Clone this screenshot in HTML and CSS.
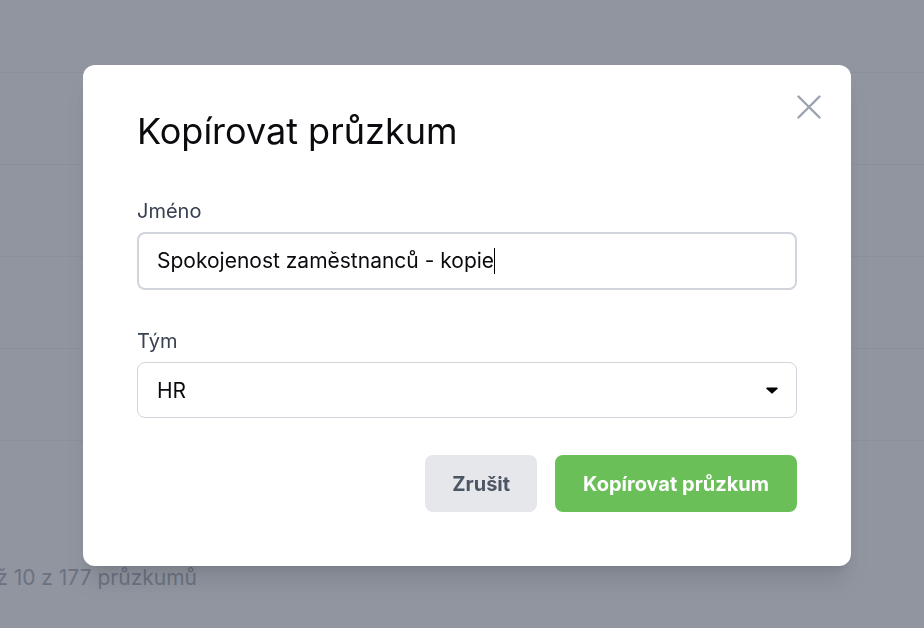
FILE: index.html
```html
<!DOCTYPE html>
<html lang="cs">
<head>
    <meta charset="UTF-8">
    <meta name="viewport" content="width=device-width, initial-scale=1.0">
    <title>Kopírovat průzkum</title>
    <link rel="stylesheet" href="styles.css">
</head>
<body>
    <div class="page">
        <div class="table">
            <div class="thead"></div>
            <div class="row"></div>
            <div class="row"></div>
            <div class="row"></div>
            <div class="row"></div>
        </div>
        <div class="pager">
            <span>Zobrazeno 1 až 10 z 177 průzkumů</span>
        </div>
    </div>

    <div class="overlay">
        <div class="modal">
            <button class="close" aria-label="Zavřít">
                <svg width="24" height="24" viewBox="0 0 24 24" fill="none" stroke="currentColor" stroke-width="2.4" stroke-linecap="round">
                    <path d="M1.5 1.5L22.5 22.5M22.5 1.5L1.5 22.5"/>
                </svg>
            </button>

            <h2 class="title">Kopírovat průzkum</h2>

            <label class="label" for="name">Jméno</label>
            <div class="input-wrap">
                <input id="name" class="input" value="Spokojenost zaměstnanců - kopie">
                <span class="caret" id="caret"></span>
            </div>

            <label class="label team" for="team">Tým</label>
            <div class="select-wrap">
                <select id="team" class="select">
                    <option>HR</option>
                    <option>IT</option>
                    <option>Marketing</option>
                </select>
                <svg class="arrow" width="12" height="7" viewBox="0 0 12 7">
                    <path d="M1 0.5h10a0.8 0.8 0 0 1 0.6 1.3L6.6 6.3a0.8 0.8 0 0 1-1.2 0L0.4 1.8A0.8 0.8 0 0 1 1 0.5z" fill="#000"/>
                </svg>
            </div>

            <div class="actions">
                <button class="btn cancel">Zrušit</button>
                <button class="btn primary">Kopírovat průzkum</button>
            </div>
        </div>
    </div>

    <script>
        // put the text cursor right after the value, like a focused field
        var input = document.getElementById("name");
        var ctx = document.createElement("canvas").getContext("2d");
        ctx.font = getComputedStyle(input).fontSize + " " + getComputedStyle(input).fontFamily;
        document.getElementById("caret").style.left = (20 + ctx.measureText(input.value).width) + "px";
    </script>
</body>
</html>
```

FILE: styles.css
```css
*{
    box-sizing: border-box;
}
body{
    margin: 0;
    font-family: Inter, "Noto Sans", sans-serif;
    background-color: white;
    overflow: hidden;
}
.thead{
    height: 73px;
    border-bottom: 1px solid #e5e7eb;
}
.row{
    height: 92px;
    border-bottom: 1px solid #e5e7eb;
}
.pager{
    width: 197px;
    display: flex;
    justify-content: flex-end;
    padding-top: 123px;
    white-space: nowrap;
    font-size: 21px;
    line-height: 28px;
    color: #6b7280;
}
.overlay{
    position: fixed;
    inset: 0;
    background-color: rgba(107, 114, 128, 0.75);
    padding: 65px 0 0 83px;
}
.modal{
    position: relative;
    width: 768px;
    background-color: white;
    border-radius: 12px;
    padding: 46px 54px 54px;
    box-shadow: 0 20px 25px -5px rgba(0, 0, 0, 0.1), 0 8px 10px -6px rgba(0, 0, 0, 0.1);
}
.close{
    position: absolute;
    top: 30px;
    right: 30px;
    width: 24px;
    height: 24px;
    padding: 0;
    border: none;
    background: none;
    color: #9ca3af;
    display: flex;
}
.title{
    margin: 0;
    font-size: 36px;
    line-height: 40px;
    font-weight: 400;
    color: #0b0b0f;
}
.label{
    display: block;
    margin-top: 46px;
    font-size: 20px;
    line-height: 28px;
    color: #374151;
}
.label.team{
    margin-top: 37px;
}
.input-wrap{
    position: relative;
    margin-top: 7px;
}
.input{
    display: block;
    width: 100%;
    padding: 14px 18px;
    border: 2px solid #d1d5db;
    border-radius: 8px;
    font-family: inherit;
    font-size: 21px;
    line-height: 26px;
    color: #0b0b0f;
    outline: none;
}
.caret{
    position: absolute;
    top: 16px;
    width: 1px;
    height: 26px;
    background-color: #000;
}
.select-wrap{
    position: relative;
    margin-top: 7px;
}
.select{
    display: block;
    width: 100%;
    height: 56px;
    padding: 0 19px;
    border: 1px solid #d1d5db;
    border-radius: 8px;
    background-color: white;
    font-family: inherit;
    font-size: 21px;
    color: #0b0b0f;
    appearance: none;
    -webkit-appearance: none;
    outline: none;
}
.arrow{
    position: absolute;
    right: 19px;
    top: 25px;
    pointer-events: none;
}
.actions{
    display: flex;
    justify-content: flex-end;
    gap: 18px;
    margin-top: 37px;
}
.btn{
    height: 57px;
    padding: 0 27px;
    border: none;
    border-radius: 8px;
    font-family: inherit;
    font-size: 20px;
    font-weight: 700;
}
.cancel{
    background-color: #e5e7eb;
    color: #4b5563;
}
.primary{
    padding: 0 28px;
    background-color: #6bbf59;
    color: white;
}
```
